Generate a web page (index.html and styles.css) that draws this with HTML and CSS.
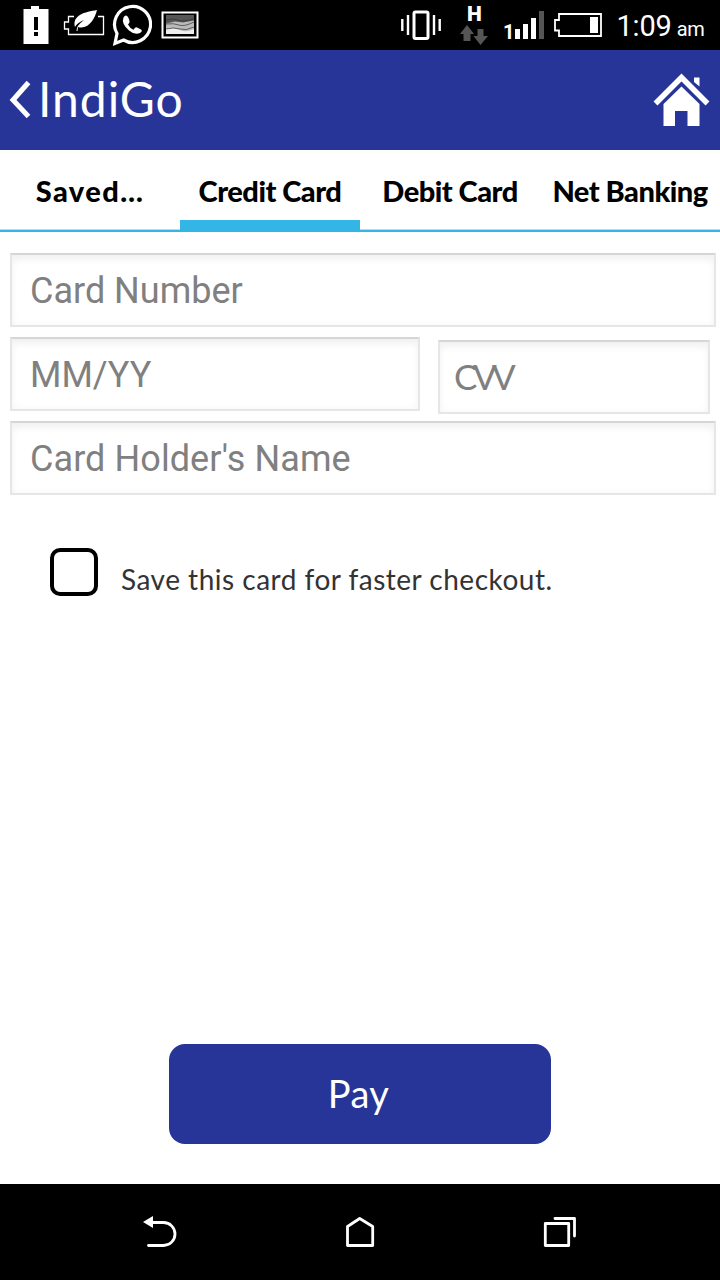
FILE: index.html
```
<!DOCTYPE html>
<html lang="en">
<head>
<meta charset="utf-8">
<title>IndiGo</title>
<link rel="stylesheet" href="styles.css">
</head>
<body>
<div class="screen">
  <header class="status">
    <div class="status-left">
      <svg width="26" height="50" viewBox="23 0 26 50"><path d="M24 9h7V6h8v3h9.500v35H23.500V9zM34 17v13h4V17zm0 15v4h4v-4z" fill="#fff" fill-rule="evenodd"/></svg>
      <svg width="42" height="50" viewBox="63 0 42 50"><path d="M74 16.500h-5.500V22h-4v7h4v5.500h35v-18H98" fill="none" stroke="#fff" stroke-width="1.300"/><path d="M75 27C72 15 85 12 97 10C95 19 88 30 78 27L77.500 31H76.500Q76 26 84 20Q77 23 75 27z" fill="#fff"/></svg>
      <svg width="40" height="50" viewBox="112 0 40 50"><path d="M117 33.500A18 18 0 1 1 123.500 40L115 43.500z" fill="none" stroke="#fff" stroke-width="3.200"/><path d="M123.500 17.500q2.500-4 5 .5l1 3q.5 1.500-1.500 3.500q2 4 5.500 5.200q2-3 3.500-2.200l4 2q2 1.500-1 3.500q-5 2.500-11-2.500q-8-7-5.500-13z" fill="#fff"/></svg>
      <svg width="38" height="50" viewBox="161 0 38 50"><path d="M162.500 12.500h35v25h-35z" fill="#000" stroke="#fff" stroke-width="2"/><path d="M166 15.500h28V34h-28z" fill="#bbb"/><path d="M166 15.500h28v5l-11 2-8-1-9 2z" fill="#555"/><path d="M166 29q8-2 14 1t14-1v5h-28z" fill="#eee"/><path d="M166 20q8-2 12 0t16-1M166 24q8-1 13 1t15-3M166 29q8-2 14 0t14-2" fill="none" stroke="#333" stroke-width=".7"/></svg>
    </div>
    <div class="status-right">
      <svg width="204" height="50" viewBox="400 0 204 50">
        <rect x="414" y="12" width="14" height="26.500" rx="1.500" fill="none" stroke="#fff" stroke-width="3"/>
        <path d="M408 15v20M434 15v20" stroke="#fff" stroke-width="2.400"/><path d="M402.300 19v12M439.700 19v12" stroke="#fff" stroke-width="2.400"/>
        <text class="network" x="467" y="21">H</text>
        <path d="M467 25l7 9h-3.500v7h-7v-7H460zM477.500 29h6v7h4.500l-7.500 9-7-9h4z" fill="#555"/>
        <text class="sim" x="503" y="39">1</text>
        <path d="M515 29h5v10h-5zM523 24h5v15h-5zM531 18h5v21h-5z" fill="#fff"/><path d="M539 11h5v28h-5z" fill="#555"/>
        <path d="M559 14h42v22h-42v-5.500h-4V20h4z" fill="none" stroke="#fff" stroke-width="1.800"/><path d="M590 17h8v16h-8z" fill="#fff"/>
      </svg>
      <span class="clock">1:09 <small class="meridiem">am</small></span>
    </div>
  </header>

  <div class="appbar">
    <div class="brand">
      <svg width="22" height="40" viewBox="9 80 22 40"><path d="M28.500 82.500L13 100L28.500 116.500" fill="none" stroke="#fff" stroke-width="5"/></svg>
      <h1 class="brand-name">IndiGo</h1>
    </div>
    <svg class="home" width="58" height="56" viewBox="652 72 58 56"><path d="M655.500 103.500L681.500 77.500L707.500 103.500" fill="none" stroke="#fff" stroke-width="5.500"/><path d="M694 77.500h5.500v9L694 82z" fill="#fff"/><path d="M681.500 86.500L699.500 104v22H687.500V111h-12.500v15H663.500v-22z" fill="#fff"/></svg>
  </div>

  <nav class="tabs">
    <a class="tab tab-saved">Saved…</a>
    <a class="tab tab-credit active">Credit Card</a>
    <a class="tab tab-debit">Debit Card</a>
    <a class="tab tab-net">Net Banking</a>
  </nav>

  <main class="content">
    <div class="field">Card Number</div>
    <div class="row">
      <div class="field expiry">MM/YY</div>
      <div class="field cvv">CVV</div>
    </div>
    <div class="field holder">Card Holder's Name</div>
    <label class="save"><span class="box"></span><span class="save-text">Save this card for faster checkout.</span></label>
    <button class="pay">Pay</button>
  </main>

  <footer class="navbar">
    <svg width="36" height="34" viewBox="142 1215 36 34"><path d="M152 1222.500H163.500a11.500 11.500 0 0 1 0 23H148.500" fill="none" stroke="#fff" stroke-width="2.800" stroke-linecap="round"/><path d="M143 1222l10-6v12z" fill="#fff"/></svg>
    <svg width="30" height="34" viewBox="346 1215 30 34"><path d="M347.500 1226.500L359.700 1218.500L372.700 1226.500V1245.500H347.500z" fill="none" stroke="#fff" stroke-width="2.800" stroke-linejoin="round"/></svg>
    <svg width="34" height="34" viewBox="543 1215 34 34"><path d="M545.300 1223.500h23.400v22h-23.400zM555 1218.500h19.500V1236" fill="none" stroke="#fff" stroke-width="2.800" stroke-linejoin="round" stroke-linecap="round"/></svg>
  </footer>
</div>
</body>
</html>
```
FILE: styles.css
```
* { box-sizing: border-box; }
body { margin: 0; background: #fff; font-family: Lato, "Liberation Sans", sans-serif; }
svg { display: block; flex: none; }
.screen { width: 720px; height: 1280px; display: flex; flex-direction: column; }

.status { height: 50px; background: #000; display: flex; justify-content: space-between; padding: 0 15px 0 23px; }
.status-left { display: flex; }
.status-left svg { margin-right: 14px; }
.status-left svg:nth-child(2) { margin-right: 7px; }
.status-left svg:nth-child(3) { margin-right: 9px; }
.status-right { display: flex; width: 305px; gap: 13px; }
.status-right svg { margin-left: -0.5px; }
.network { font: 900 21px Roboto, sans-serif; fill: #fff; }
.sim { font: 700 20px Roboto, sans-serif; fill: #fff; }
.clock { font: 400 29px/53px Roboto, sans-serif; color: #fff; white-space: nowrap; letter-spacing: -0.2px; }
.meridiem { font-size: 20px; margin-left: -2px; }

.appbar { height: 100px; background: #273598; display: flex; align-items: center; justify-content: space-between; padding: 0 10px 0 9px; }
.brand { display: flex; align-items: center; gap: 7px; }
.brand-name { margin: 0; padding-bottom: 2px; font-size: 48px; line-height: 58px; font-weight: 400; color: #fff; letter-spacing: 1px; }

.tabs { height: 82px; display: grid; grid-template-columns: repeat(4, 180px); border-bottom: 2px solid #33b5e5; box-shadow: inset 0 -1px #b9dce9; }
.tab { height: 82px; text-align: center; font-size: 29px; line-height: 82px; font-weight: 900; color: #000; white-space: nowrap; letter-spacing: -0.5px; }
.tab-saved { letter-spacing: 1.4px; }
.active { border-bottom: 12px solid #33b5e5; }

.content { flex: 1; display: flex; flex-direction: column; padding: 21px 4px 40px 10px; }
.field { height: 74px; flex: none; border: 2px solid #e6e6e6; border-top-color: #d6d6d6; box-shadow: inset 0 7px 9px -3px #f0f0f0, inset 0 0 9px #f7f7f7; padding-left: 18px; font: 400 36px/73px Roboto, sans-serif; color: #808080; }
.holder { letter-spacing: 0.08px; }
.row { display: flex; gap: 18px; height: 84px; margin-top: 10px; }
.expiry { width: 410px; }
.cvv { width: 272px; margin-top: 3px; padding-left: 14px; font-family: Lato, sans-serif; font-size: 35px; line-height: 69px; letter-spacing: -4.5px; }
.save { display: flex; align-items: center; gap: 23px; margin: 53px 0 0 40px; height: 48px; }
.box { width: 48px; height: 48px; border: 4px solid #000; border-radius: 10px; flex: none; }
.save-text { font-size: 28px; line-height: 36px; padding-top: 14px; color: #333; white-space: nowrap; letter-spacing: 0.5px; }
.pay { margin: auto 0 0 159px; width: 382px; height: 100px; border: 0; border-radius: 16px; background: #273598; color: #fff; font: 400 38px Lato, sans-serif; padding: 0 3px 3px 0; letter-spacing: 0.4px; }

.navbar { height: 96px; background: #000; display: flex; align-items: center; justify-content: space-between; padding: 0 143px 0 142px; }
```
